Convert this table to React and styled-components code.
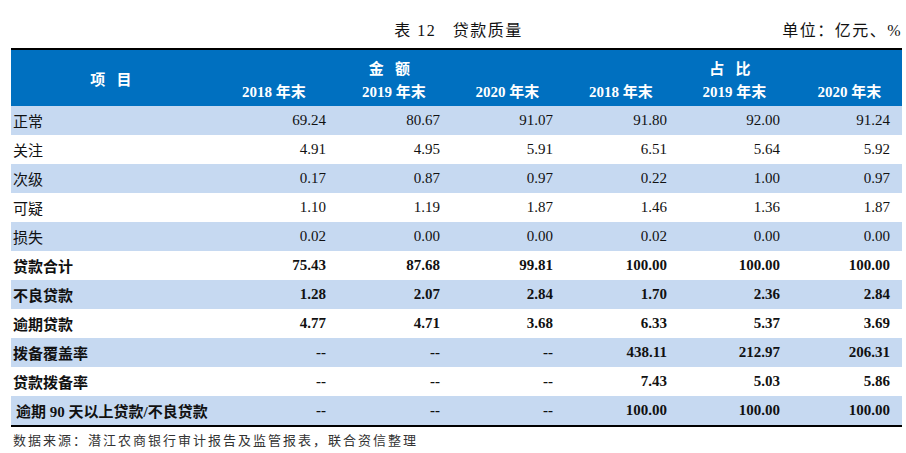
import React from 'react'
import styled, { createGlobalStyle } from 'styled-components'

const COLS = [206, 114, 114, 113, 114, 113, 117]

const rows = [
    { name: '正常', vals: ['69.24', '80.67', '91.07', '91.80', '92.00', '91.24'] },
    { name: '关注', vals: ['4.91', '4.95', '5.91', '6.51', '5.64', '5.92'] },
    { name: '次级', vals: ['0.17', '0.87', '0.97', '0.22', '1.00', '0.97'] },
    { name: '可疑', vals: ['1.10', '1.19', '1.87', '1.46', '1.36', '1.87'] },
    { name: '损失', vals: ['0.02', '0.00', '0.00', '0.02', '0.00', '0.00'] },
    { name: '贷款合计', bold: true, vals: ['75.43', '87.68', '99.81', '100.00', '100.00', '100.00'] },
    { name: '不良贷款', bold: true, vals: ['1.28', '2.07', '2.84', '1.70', '2.36', '2.84'] },
    { name: '逾期贷款', bold: true, vals: ['4.77', '4.71', '3.68', '6.33', '5.37', '3.69'] },
    { name: '拨备覆盖率', bold: true, vals: ['--', '--', '--', '438.11', '212.97', '206.31'] },
    { name: '贷款拨备率', bold: true, vals: ['--', '--', '--', '7.43', '5.03', '5.86'] },
    { name: '逾期 90 天以上贷款/不良贷款', bold: true, indent: true, vals: ['--', '--', '--', '100.00', '100.00', '100.00'] },
]

const years = ['2018 年末', '2019 年末', '2020 年末', '2018 年末', '2019 年末', '2020 年末']

const App = () => (
    <>
        <GlobalStyle />
        <Page>
            <TitleBar>
                <Caption>表 12&nbsp;&nbsp;&nbsp;贷款质量</Caption>
                <Unit>单位：亿元、%</Unit>
            </TitleBar>
            <Table>
                <Header>
                    <ItemHead>项&nbsp;&nbsp;&nbsp;目</ItemHead>
                    <GroupHead $col={3}>金&nbsp;&nbsp;&nbsp;额</GroupHead>
                    <GroupHead $col={6}>占&nbsp;&nbsp;&nbsp;比</GroupHead>
                    {years.map((y, i) => (
                        <YearHead key={i} $col={i + 2}>{y}</YearHead>
                    ))}
                </Header>
                {rows.map((r, i) => (
                    <Row key={r.name} $shaded={i % 2 === 0} $bold={r.bold}>
                        <Label $indent={r.indent}>{r.name}</Label>
                        {r.vals.map((v, j) => (
                            <Num key={j} $last={j === 5}>{v}</Num>
                        ))}
                    </Row>
                ))}
            </Table>
            <Source>数据来源：潜江农商银行审计报告及监管报表，联合资信整理</Source>
        </Page>
    </>
)

const GlobalStyle = createGlobalStyle`
    body {
        margin: 0;
        background: #fff;
        font-family: "Liberation Serif", "Noto Sans CJK SC", serif;
        color: #000;
    }
`

const Page = styled.div`
    width: 906px;
    padding-left: 11px;
    box-sizing: border-box;
`

const TitleBar = styled.div`
    position: relative;
    display: flex;
    justify-content: center;
    align-items: flex-end;
    width: 891px;
    height: 48px;
    padding-bottom: 7px;
    box-sizing: border-box;
    font-size: 16px;
    color: #111;
`

const Caption = styled.div`
    letter-spacing: 1.5px;
    margin-left: 4px;
`

const Unit = styled.div`
    position: absolute;
    right: 0;
    bottom: 7px;
    letter-spacing: 1.5px;
`

const Table = styled.div`
    width: 891px;
    border-top: 2px solid #000;
    border-bottom: 2px solid #000;
`

const Header = styled.div`
    display: grid;
    grid-template-columns: ${COLS.map(c => c + 'px').join(' ')};
    grid-template-rows: 29px 27px;
    background: #0070c0;
    color: #fff;
    font-weight: bold;
    font-size: 15px;
`

const ItemHead = styled.div`
    grid-column: 1;
    grid-row: 1 / span 2;
    display: flex;
    align-items: center;
    justify-content: center;
    padding-right: 6px;
`

const GroupHead = styled.div`
    grid-column: ${p => p.$col};
    grid-row: 1;
    display: flex;
    align-items: flex-end;
    justify-content: center;
    padding-left: 3px;
    padding-bottom: 1px;
`

const YearHead = styled.div`
    grid-column: ${p => p.$col};
    grid-row: 2;
    display: flex;
    align-items: flex-start;
    justify-content: center;
    padding-left: ${p => (p.$col === 2 ? 0 : 12)}px;
    padding-top: 1px;
`

const Row = styled.div`
    display: grid;
    grid-template-columns: ${COLS.map(c => c + 'px').join(' ')};
    height: 29px;
    align-items: center;
    background: ${p => (p.$shaded ? '#c6d9f1' : '#fff')};
    font-weight: ${p => (p.$bold ? 'bold' : 'normal')};
    font-size: 15px;
    color: #111;
`

const Label = styled.div`
    padding-left: ${p => (p.$indent ? 5 : 2)}px;
    white-space: nowrap;
`

const Num = styled.div`
    text-align: right;
    padding-right: ${p => (p.$last ? 12 : 5)}px;
`

const Source = styled.div`
    padding: 3px 0 0 2px;
    font-size: 13px;
    letter-spacing: 2px;
    color: #333;
`

export default App
